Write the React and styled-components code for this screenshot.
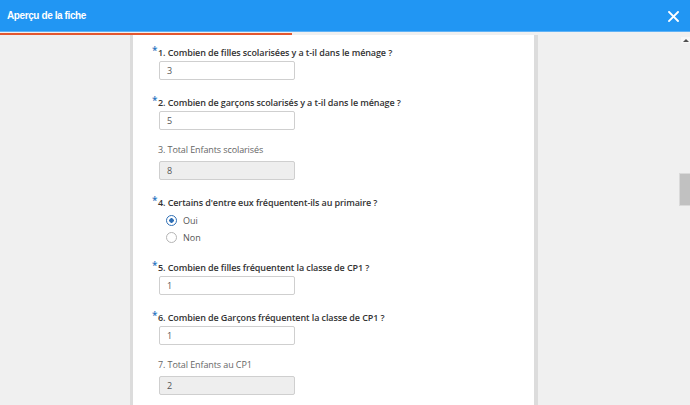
import React from 'react'
import styled, { createGlobalStyle } from 'styled-components'

const GlobalStyle = createGlobalStyle`
  html, body {
    margin: 0;
    padding: 0;
    height: 100%;
    overflow: hidden;
    background: #f0f0f0;
  }
  #root {
    height: 100%;
  }
`

const questions = [
  { n: 1, label: 'Combien de filles scolarisées y a t-il dans le ménage ?', required: true, value: '3' },
  { n: 2, label: 'Combien de garçons scolarisés y a t-il dans le ménage ?', required: true, value: '5' },
  { n: 3, label: 'Total Enfants scolarisés', value: '8', computed: true },
  { n: 4, label: "Certains d'entre eux fréquentent-ils au primaire ?", required: true, options: ['Oui', 'Non'], selected: 'Oui' },
  { n: 5, label: 'Combien de filles fréquentent la classe de CP1 ?', required: true, value: '1' },
  { n: 6, label: 'Combien de Garçons fréquentent la classe de CP1 ?', required: true, value: '1' },
  { n: 7, label: 'Total Enfants au CP1', value: '2', computed: true },
]

export default function App() {
  return (
    <Screen>
      <GlobalStyle />
      <Header>
        <Title>Aperçu de la fiche</Title>
        <CloseButton aria-label="Fermer">
          <svg width="11" height="11" viewBox="0 0 11 11">
            <path d="M1 1 L10 10 M10 1 L1 10" stroke="#fff" strokeWidth="1.9" strokeLinecap="square" />
          </svg>
        </CloseButton>
      </Header>
      <Progress>
        <ProgressFill style={{ width: '42.3%' }} />
      </Progress>
      <Body>
        <Gutter />
        <Sheet>
          {questions.map((q) => (
            <Question key={q.n}>
              <Label $muted={q.computed}>
                {q.required && <Star>*</Star>}
                {q.n}. {q.label}
              </Label>
              {q.options ? (
                <Options>
                  {q.options.map((o) => (
                    <Option key={o}>
                      <Radio $checked={o === q.selected} />
                      {o}
                    </Option>
                  ))}
                </Options>
              ) : (
                <Field $readonly={q.computed}>{q.value}</Field>
              )}
            </Question>
          ))}
        </Sheet>
        <Gutter $grow />
        <ScrollTrack>
          <ScrollArrow />
          <ScrollThumb />
        </ScrollTrack>
      </Body>
    </Screen>
  )
}

const Screen = styled.div`
  height: 405px;
  display: flex;
  flex-direction: column;
  background: #f0f0f0;
  overflow: hidden;
`

const Header = styled.div`
  height: 31px;
  flex: none;
  display: flex;
  align-items: center;
  justify-content: space-between;
  padding: 0 7px;
  background: #2196f3;
  border-bottom: 1px solid #5fb2f6;
`

const Title = styled.div`
  color: #fff;
  font-family: 'Liberation Sans', Arial, sans-serif;
  font-weight: bold;
  font-size: 10px;
  letter-spacing: -0.4px;
`

const CloseButton = styled.div`
  display: flex;
  margin-right: 4px;
  margin-top: 2px;
`

const Progress = styled.div`
  height: 3px;
  flex: none;
  background: #f0f0f0;
`

const ProgressFill = styled.div`
  height: 2px;
  margin-top: 1px;
  background: #e4572e;
`

const Body = styled.div`
  flex: 1;
  display: flex;
  min-height: 0;
`

const Gutter = styled.div`
  width: ${(p) => (p.$grow ? 'auto' : '130px')};
  flex: ${(p) => (p.$grow ? '1' : 'none')};
`

const Sheet = styled.div`
  width: 408px;
  flex: none;
  background: #fff;
  border-left: 3px solid #dcdcdc;
  border-right: 4px solid #dcdcdc;
  padding: 8px 0 0 25px;
  box-sizing: border-box;
  font-family: 'Open Sans', sans-serif;
`

const Question = styled.div`
  margin-bottom: 13px;
`

const Label = styled.div`
  height: 14px;
  line-height: 14px;
  font-size: 9px;
  letter-spacing: -0.1px;
  font-weight: ${(p) => (p.$muted ? 400 : 600)};
  color: ${(p) => (p.$muted ? '#666' : '#333')};
  margin-bottom: 4px;
  white-space: nowrap;
`

const Star = styled.span`
  display: inline-block;
  width: 6px;
  margin-left: -6px;
  color: #2a74c0;
  font-size: 10px;
  vertical-align: 2px;
`

const Field = styled.div`
  width: 136px;
  height: 19px;
  box-sizing: border-box;
  margin-left: 1px;
  padding-left: 7px;
  border: 1px solid #cfcfcf;
  border-radius: 2px;
  background: ${(p) => (p.$readonly ? '#eeeeee' : '#fff')};
  font-size: 9px;
  line-height: 17px;
  color: #555;
`

const Options = styled.div`
  padding: 1px 0 0 8px;
  margin-bottom: -1px;
`

const Option = styled.div`
  display: flex;
  align-items: center;
  height: 17px;
  gap: 6px;
  font-size: 9px;
  color: #555;
`

const Radio = styled.span`
  width: 11px;
  height: 11px;
  box-sizing: border-box;
  border-radius: 50%;
  border: 1px solid ${(p) => (p.$checked ? '#2f6fb5' : '#b5b5b5')};
  background: ${(p) => (p.$checked ? 'radial-gradient(circle, #2f6fb5 0 2px, #fff 2.5px)' : '#fff')};
`

const ScrollTrack = styled.div`
  width: 11px;
  flex: none;
  display: flex;
  flex-direction: column;
  align-items: flex-end;
`

const ScrollArrow = styled.div`
  margin-top: 2px;
  width: 9px;
  height: 6px;
  background: #f7f7f7;
  display: flex;
  align-items: center;
  justify-content: center;
  &::before {
    content: '';
    border-left: 3px solid transparent;
    border-right: 3px solid transparent;
    border-bottom: 3px solid #505050;
  }
`

const ScrollThumb = styled.div`
  margin-top: 130px;
  width: 11px;
  height: 33px;
  box-sizing: border-box;
  background: #c1c1c1;
  border: 1px solid #dadada;
  border-right: none;
`
